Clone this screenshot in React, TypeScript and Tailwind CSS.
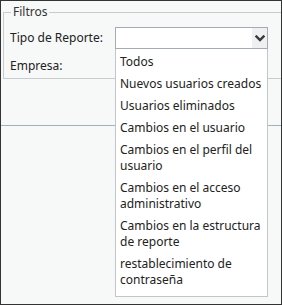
const options = [
  'Todos',
  'Nuevos usuarios creados',
  'Usuarios eliminados',
  'Cambios en el usuario',
  'Cambios en el perfil del usuario',
  'Cambios en el acceso administrativo',
  'Cambios en la estructura de reporte',
  'restablecimiento de contraseña',
]

export default function App() {
  return (
    <div
      className="relative w-[282px] h-[305px] overflow-hidden border border-[#333] bg-[#f7f8f8] text-[12px] text-[#222]"
      style={{ fontFamily: '"Noto Sans", "Open Sans", sans-serif' }}
    >
      <fieldset className="ml-[2px] mt-[3px] w-[300px] border border-[#c9cccf] pl-[6px] pt-[7px] pb-[1px]">
        <legend className="ml-[1px] px-[2px] leading-[16px] text-[#333]">Filtros</legend>
        <div className="flex items-center h-[22px]">
          <span className="w-[105px] leading-[16px]">Tipo de Reporte:</span>
          <div className="flex w-[153px] h-[22px] border border-[#a4abb2] bg-white">
            <div className="flex-1" />
            <div className="flex w-[15px] items-center justify-center bg-[#eef0f1]">
              <svg width="10" height="7" viewBox="0 0 10 7">
                <polyline points="1.5,1.5 5,5 8.5,1.5" fill="none" stroke="#3a3a3a" strokeWidth="2.4" strokeLinecap="square" />
              </svg>
            </div>
          </div>
        </div>
        <div className="mt-[6px] flex items-center h-[22px]">
          <span className="w-[105px] leading-[16px]">Empresa:</span>
        </div>
      </fieldset>

      <div className="mt-[46px] h-px bg-[#a6b0b8]" />

      <ul className="absolute left-[114px] top-[48px] w-[153px] border border-t-0 border-[#c3c6c9] bg-white pt-[2px] pb-[5px]">
        {options.map((o) => (
          <li key={o} className="px-[4px] py-[3px] leading-[16px] text-[#222]">
            {o}
          </li>
        ))}
      </ul>
    </div>
  )
}
